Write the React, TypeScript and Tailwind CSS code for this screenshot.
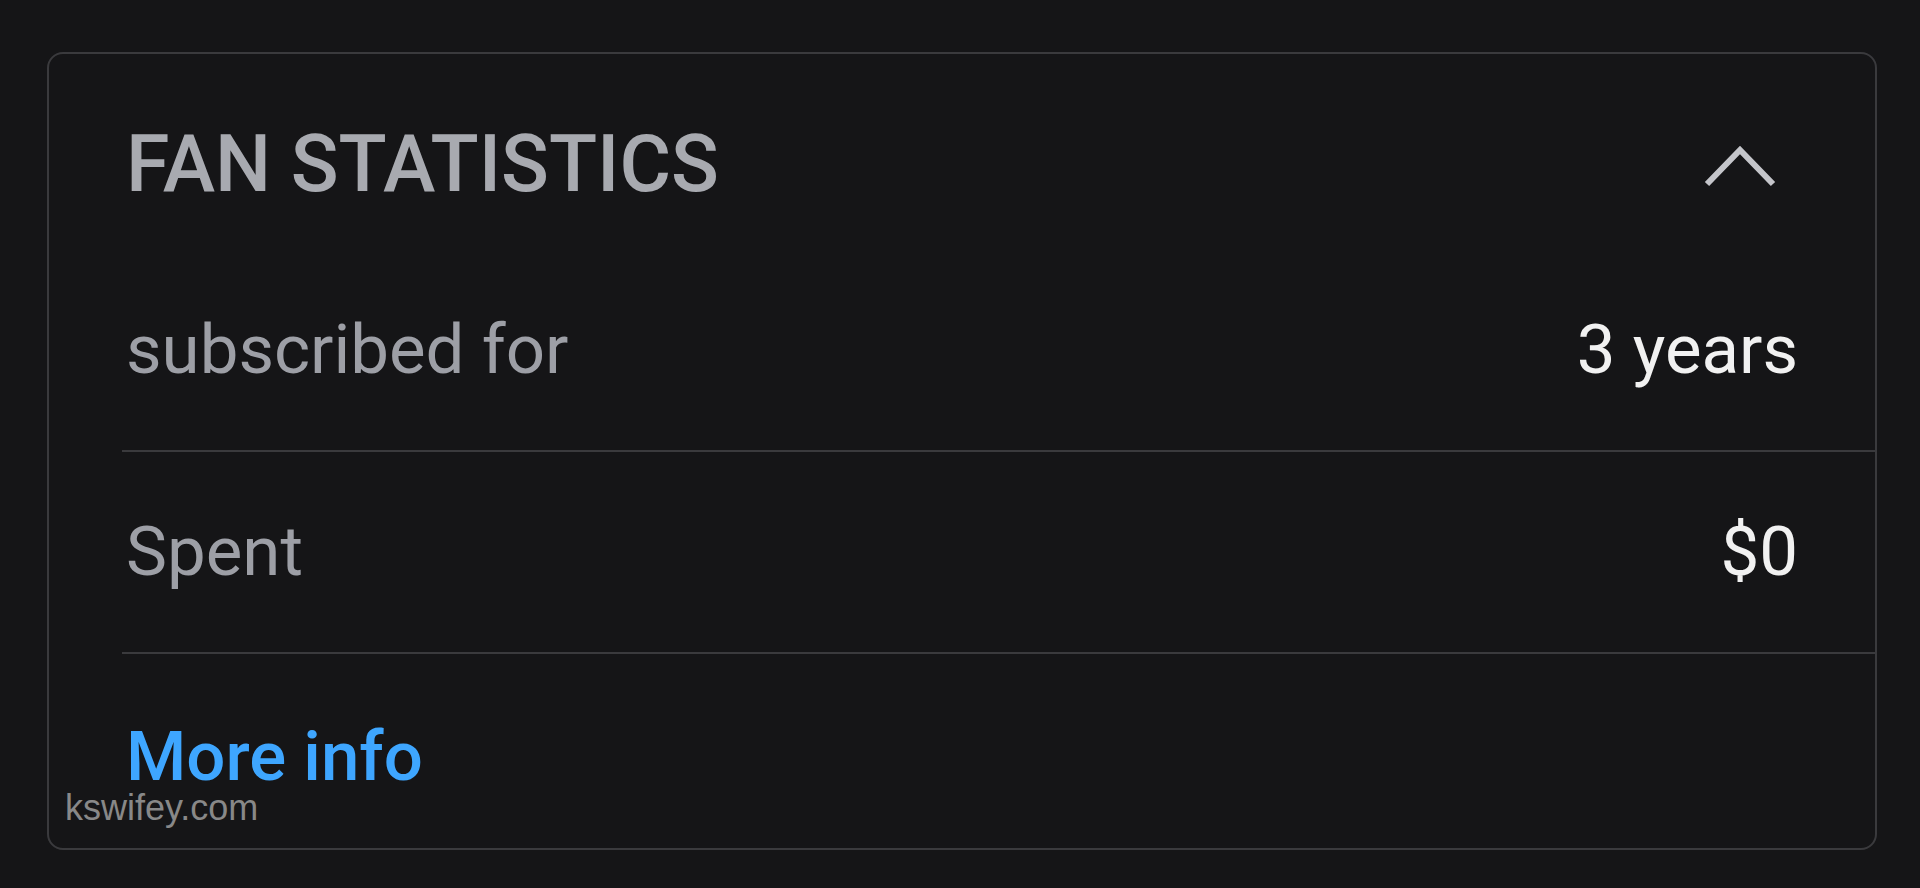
const ChevronUp = () => (
  <svg width="74" height="48" viewBox="0 0 74 48" fill="none">
    <polyline
      points="4,44 37,10 70,44"
      stroke="#c4c5ca"
      strokeWidth="6"
      strokeLinecap="butt"
      strokeLinejoin="miter"
    />
  </svg>
);

interface StatRowProps {
  label: string;
  value: string;
}

const StatRow = ({ label, value }: StatRowProps) => {
  return (
    <div className="flex h-[202px] items-center justify-between border-b-2 border-[#3a3a3d] pl-[4px] pr-[77px]">
      <span className="text-[69px] leading-[1.2] text-[#9d9fa6]">{label}</span>
      <span className="text-[69px] leading-[1.2] text-[#f1f1f1]">{value}</span>
    </div>
  );
};

const App = () => {
  return (
    <div
      className="min-h-screen bg-[#151517] pl-[47px] pt-[52px]"
      style={{ fontFamily: "Roboto, 'Liberation Sans', sans-serif" }}
    >
      <div className="relative flex h-[798px] w-[1830px] flex-col rounded-[16px] border-2 border-[#3a3a3d] pl-[73px]">
        <div className="flex h-[196px] items-center justify-between pl-[4px] pr-[98px] pt-[24px]">
          <h2 className="text-[79px] font-medium leading-[1.2] text-[#a8aab0]">
            FAN STATISTICS
          </h2>
          <ChevronUp />
        </div>

        <StatRow label="subscribed for" value="3 years" />
        <StatRow label="Spent" value="$0" />

        <div className="flex flex-1 items-center pl-[4px] pt-[12px]">
          <a className="text-[69px] font-medium leading-[0.9] text-[#3ea6ff]">
            More info
          </a>
        </div>

        <span
          className="absolute left-[16px] top-[736px] text-[36px] leading-none text-[#888888]"
          style={{ fontFamily: "'Liberation Sans', Arial, sans-serif" }}
        >
          kswifey.com
        </span>
      </div>
    </div>
  );
};

export default App;
